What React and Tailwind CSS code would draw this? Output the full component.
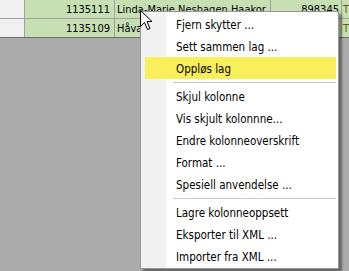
import React from 'react';

const font = { fontFamily: '"DejaVu Sans Condensed", "DejaVu Sans", sans-serif', fontStretch: 'condensed' };

const groups = [
  ['Fjern skytter ...', 'Sett sammen lag ...', 'Oppløs lag'],
  ['Skjul kolonne', 'Vis skjult kolonnne...', 'Endre kolonneoverskrift', 'Format ...', 'Spesiell anvendelse ...'],
  ['Lagre kolonneoppsett', 'Eksporter til XML ...', 'Importer fra XML ...'],
];

function Row({ id, name, num, last }) {
  return (
    <div className={`flex h-[19px] text-[11px] ${last ? 'border-b border-[#6e6e6e]' : 'border-b border-[#a0a0a0]'}`}>
      <div className="w-[25px] shrink-0 bg-[#f0f0f0] border-r border-[#a0a0a0]" />
      <div className="w-[90px] shrink-0 bg-[#c6e0b4] border-r border-[#a0a0a0] pr-[4px] text-right leading-[19px]">{id}</div>
      <div className="w-[156px] shrink-0 bg-[#c6e0b4] border-r border-[#a0a0a0] pl-[2px] leading-[19px] overflow-hidden whitespace-nowrap">{name}</div>
      <div className="w-[71px] shrink-0 bg-[#c6e0b4] border-r border-[#a0a0a0] pr-[2px] text-right leading-[19px]">{num}</div>
      <div className="flex-1 bg-[#c6e0b4] pl-[1px] leading-[19px] text-[#6b5a00]">T</div>
    </div>
  );
}

function MenuItem({ label, active }) {
  return (
    <div className={`h-[22px] ml-[4px] mr-[2px] flex items-center pt-[3px] pl-[31px] ${active ? 'bg-[#f8ef5a]' : ''}`}>
      {label}
    </div>
  );
}

export default function App() {
  return (
    <div className="relative w-[349px] h-[271px] overflow-hidden bg-[#ababab] text-[11.5px] text-black" style={font}>
      <Row id="1135111" name="Linda-Marie Neshagen Haakor" num="898345" />
      <Row id="1135109" name="Håvard" num="" last />

      <div className="absolute left-[140px] top-[11px] w-[199px] border border-[#979797] bg-white shadow-[3px_3px_2px_rgba(0,0,0,0.4)] py-[1px]">
        <div className="absolute left-0 top-0 bottom-0 w-[25px] bg-[#f1f1f1]" />
        <div className="relative">
          {groups.map((g, gi) => (
            <div key={gi}>
              {gi > 0 && (
                <div className="h-[6px] flex items-center ml-[32px] mr-[2px]">
                  <div className="h-px w-full bg-[#c8c8c8]" />
                </div>
              )}
              {g.map((label) => (
                <MenuItem key={label} label={label} active={label === 'Oppløs lag'} />
              ))}
            </div>
          ))}
        </div>
      </div>

      <svg className="absolute left-[140px] top-[10px]" width="13" height="21" viewBox="0 0 13 21">
        <path d="M0.5 0.5 L0.5 16.5 L4.5 12.5 L7.5 19.5 L10 18.5 L7 11.5 L12 11.5 Z" fill="white" stroke="black" strokeWidth="1" />
      </svg>
    </div>
  );
}
